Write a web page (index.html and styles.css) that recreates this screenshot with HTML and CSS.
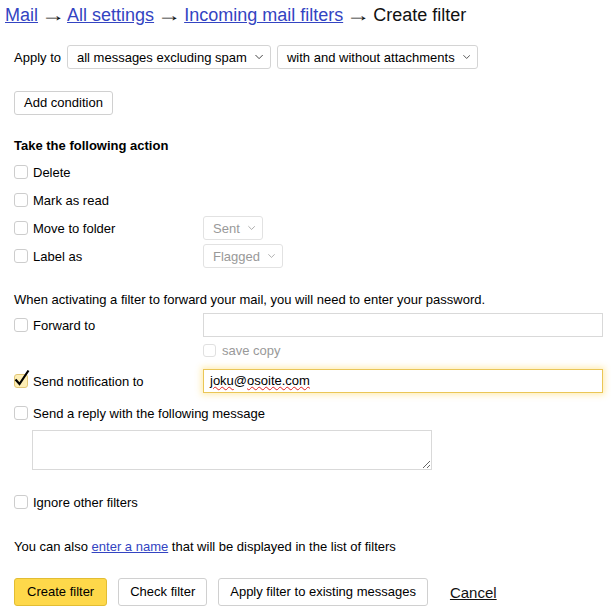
FILE: index.html
```html
<!DOCTYPE html>
<html>
<head>
<meta charset="utf-8">
<link rel="stylesheet" href="styles.css">
</head>
<body>
<div class="page">
  <h1 class="crumbs"><a href="#">Mail</a> <span class="arr">→</span> <a href="#">All settings</a> <span class="arr">→</span> <a href="#">Incoming mail filters</a> <span class="arr">→</span> Create filter</h1>

  <div class="apply-row">
    <span class="apply-label">Apply to</span>
    <span class="select sel-wide1">all messages excluding spam <svg class="chev" width="9" height="6" viewBox="0 0 9 6"><path d="M0.5 0.8 L4.5 4.8 L8.5 0.8" fill="none" stroke="#333" stroke-width="1"/></svg></span>
    <span class="select sel-wide2">with and without attachments <svg class="chev" width="9" height="6" viewBox="0 0 9 6"><path d="M0.5 0.8 L4.5 4.8 L8.5 0.8" fill="none" stroke="#333" stroke-width="1"/></svg></span>
  </div>

  <button class="btn add-cond">Add condition</button>

  <div class="section-title">Take the following action</div>

  <div class="act-row"><label class="chk"><span class="box"></span>Delete</label></div>
  <div class="act-row"><label class="chk"><span class="box"></span>Mark as read</label></div>
  <div class="act-row"><label class="chk col"><span class="box"></span>Move to folder</label><span class="select disabled sel-sent">Sent <svg class="chev" width="9" height="6" viewBox="0 0 9 6"><path d="M0.5 0.8 L4.5 4.8 L8.5 0.8" fill="none" stroke="#999" stroke-width="1"/></svg></span></div>
  <div class="act-row"><label class="chk col"><span class="box"></span>Label as</label><span class="select disabled sel-flag">Flagged <svg class="chev" width="9" height="6" viewBox="0 0 9 6"><path d="M0.5 0.8 L4.5 4.8 L8.5 0.8" fill="none" stroke="#999" stroke-width="1"/></svg></span></div>

  <p class="note">When activating a filter to forward your mail, you will need to enter your password.</p>

  <div class="field-row fwd"><label class="chk col"><span class="box"></span>Forward to</label><div class="input"></div></div>
  <div class="save-row"><span class="box small"></span>save copy</div>

  <div class="field-row notif"><label class="chk col"><span class="box checked"><svg class="tick" width="16" height="18" viewBox="0 0 16 18"><path d="M1.5 10.5 L5.5 15 L14.5 1.5" fill="none" stroke="#000" stroke-width="2.2" stroke-linejoin="miter"/></svg></span>Send notification to</label><div class="input focus"><span class="sp">joku</span>@<span class="sp">osoite.com</span></div></div>

  <div class="act-row reply"><label class="chk"><span class="box"></span>Send a reply with the following message</label></div>
  <textarea class="reply-text"></textarea>

  <div class="act-row ignore"><label class="chk"><span class="box"></span>Ignore other filters</label></div>

  <p class="name-note">You can also <a href="#">enter a name</a> that will be displayed in the list of filters</p>

  <div class="actions">
    <button class="btn primary">Create filter</button>
    <button class="btn">Check filter</button>
    <button class="btn">Apply filter to existing messages</button>
    <a href="#" class="cancel">Cancel</a>
  </div>
</div>
</body>
</html>
```

FILE: styles.css
```css
* { box-sizing: border-box; }
body {
  margin: 0;
  background: #fff;
  font-family: "Liberation Sans", Arial, sans-serif;
  font-size: 13px;
  color: #000;
}
.page {
  padding: 0 8px 0 14px;
}
a { color: #3344c2; }
.crumbs {
  margin: 0 0 0 -9px;
  padding-top: 4px;
  font-size: 18px;
  line-height: 22px;
  font-weight: normal;
  color: #111;
  white-space: nowrap;
}
.arr {
  display: inline-block;
  margin: 0 1px;
  transform: scaleX(1.35);
}
.apply-row {
  margin-top: 19px;
  display: flex;
  align-items: center;
  height: 24px;
}
.apply-label { margin-right: 6px; }
.select {
  display: inline-flex;
  align-items: center;
  justify-content: space-between;
  height: 24px;
  border: 1px solid #d4d4d4;
  border-radius: 3px;
  padding: 0 7px 0 9px;
  background: #fff;
  white-space: nowrap;
}
.chev { margin-left: 8px; display: block; }
.sel-wide1 { width: 204px; margin-right: 6px; }
.sel-wide2 { width: 201px; }
.select.disabled { color: #999; border-color: #e2e2e2; }
.sel-sent { width: 60px; }
.sel-flag { width: 80px; }

.btn {
  font-family: inherit;
  font-size: 13px;
  color: #000;
  background: #fff;
  border: 1px solid #d0d0d0;
  border-radius: 3px;
  height: 24px;
  padding: 0 9px;
  line-height: 22px;
  white-space: nowrap;
}
.add-cond {
  display: block;
  margin-top: 22px;
  width: 99px;
}
.section-title {
  margin-top: 23px;
  font-weight: bold;
  line-height: 16px;
}
.act-row {
  display: flex;
  align-items: center;
  height: 28px;
}
.section-title + .act-row { margin-top: 4px; }
.chk {
  display: flex;
  align-items: center;
}
.chk.col { width: 189px; flex-shrink: 0; }
.box {
  position: relative;
  display: inline-block;
  width: 14px;
  height: 14px;
  border: 1px solid #cdcdcd;
  border-radius: 3px;
  background: #fff;
  margin-right: 5px;
  flex-shrink: 0;
}
.box.small {
  width: 13px;
  height: 13px;
  border-color: #e0e0e0;
  margin-right: 6px;
}
.box.checked {
  background: #fdeeb6;
  border-color: #e2c777;
}
.tick {
  position: absolute;
  left: -1px;
  top: -6px;
}
.note {
  margin: 22px 0 0;
  line-height: 16px;
}
.field-row {
  display: flex;
  align-items: center;
  height: 24px;
}
.fwd { margin-top: 5px; }
.input {
  width: 400px;
  height: 24px;
  border: 1px solid #d9d9d9;
  background: #fff;
  padding: 0 6px;
  line-height: 22px;
}
.input.focus {
  border-color: #eac656;
  box-shadow: 0 0 6px 2px rgba(255, 214, 90, 0.45);
}
.sp {
  text-decoration: underline wavy #e02020;
  text-decoration-thickness: 1px;
  text-underline-offset: 1px;
}
.save-row {
  margin: 5px 0 0 189px;
  display: flex;
  align-items: center;
  height: 16px;
  color: #999;
}
.notif { margin-top: 11px; }
.reply { margin-top: 6px; }
.reply-text {
  display: block;
  margin: 3px 0 0 18px;
  width: 400px;
  height: 40px;
  border: 1px solid #d9d9d9;
  resize: both;
  font-family: inherit;
}
.ignore { margin-top: 18px; }
.name-note {
  margin: 23px 0 0;
  line-height: 16px;
}
.actions {
  margin-top: 23px;
  display: flex;
  align-items: center;
}
.actions .btn {
  height: 28px;
  line-height: 26px;
  padding: 0 11px;
  margin-right: 11px;
}
.actions .btn.primary {
  background: #fed84a;
  border-color: #e2bd33;
  padding: 0 12px;
}
.cancel {
  margin-left: 11px;
  font-size: 15px;
  color: #111;
}
```
